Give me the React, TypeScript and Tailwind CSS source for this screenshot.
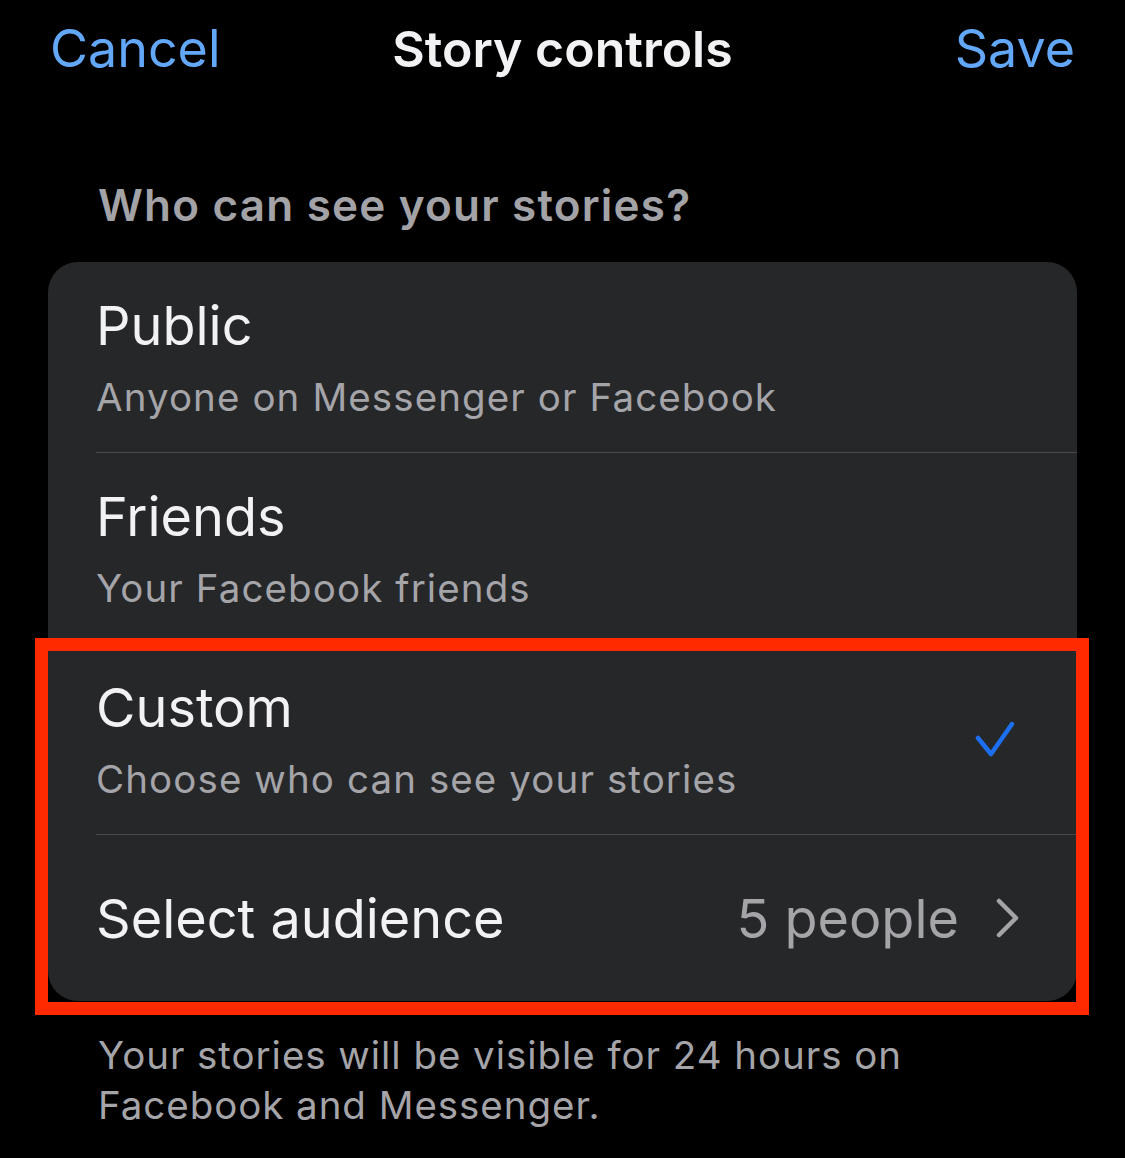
import React from 'react'

const font = { fontFamily: 'Inter, "Noto Sans", sans-serif' }

function Row({ title, sub, checked, last }: { title: string; sub: string; checked?: boolean; last?: boolean }) {
    return (
        <div className="pl-[48px]">
            <div className={`h-[191px] flex items-center pr-[62px] ${last ? '' : 'border-b border-[#4a4a4d]'}`}>
                <div className="flex-1 flex flex-col">
                    <span className="text-[54px] leading-[64px] text-[#f2f2f5]">{title}</span>
                    <span className="text-[38.5px] leading-[48px] text-[#a4a4a9] mt-[15px] tracking-[1.1px]">{sub}</span>
                </div>
                {checked && (
                    <svg width="40" height="38" viewBox="0 0 40 38" className="mt-[2px]">
                        <path d="M3 17 L16 33 L37 3" fill="none" stroke="#1d6ff2" strokeWidth="4.5" strokeLinecap="round" strokeLinejoin="round" />
                    </svg>
                )}
            </div>
        </div>
    )
}

export default function App() {
    return (
        <div className="w-[1125px] h-[1158px] bg-black overflow-hidden" style={font}>
            <div className="h-[100px] flex items-center px-[50px] pb-[2px]">
                <span className="flex-1 text-[52px] text-[#62a7f8]">Cancel</span>
                <span className="text-[50px] font-semibold text-[#f2f2f5]">Story controls</span>
                <span className="flex-1 text-right text-[52px] text-[#62a7f8]">Save</span>
            </div>

            <div className="pl-[98px] pt-[76px] pb-[28px]">
                <span className="text-[44px] leading-[58px] font-semibold text-[#a2a2a7] tracking-[1.2px]">Who can see your stories?</span>
            </div>

            <div className="relative mx-[48px]">
                <div className="bg-[#262729] rounded-[30px] overflow-hidden">
                    <Row title="Public" sub="Anyone on Messenger or Facebook" />
                    <Row title="Friends" sub="Your Facebook friends" />
                    <Row title="Custom" sub="Choose who can see your stories" checked />
                    <div className="pl-[48px]">
                        <div className="h-[166px] flex items-center pr-[56px]">
                            <span className="flex-1 text-[54px] text-[#f2f2f5]">Select audience</span>
                            <span className="text-[54px] text-[#a4a4a9] mr-[36px]">5 people</span>
                            <svg width="26" height="42" viewBox="0 0 26 42">
                                <path d="M4 4 L21 21 L4 38" fill="none" stroke="#a4a4a9" strokeWidth="4.5" strokeLinecap="round" strokeLinejoin="round" />
                            </svg>
                        </div>
                    </div>
                </div>
                <div className="absolute left-[-13px] right-[-12px] top-[376px] h-[377px] border-[13px] border-[#ff2a00]" />
            </div>

            <div className="pl-[98px] pr-[40px] pt-[29px]">
                <p className="text-[38.5px] leading-[50px] text-[#a4a4a9] tracking-[0.95px]">
                    Your stories will be visible for 24 hours on<br />Facebook and Messenger.
                </p>
            </div>
        </div>
    )
}
